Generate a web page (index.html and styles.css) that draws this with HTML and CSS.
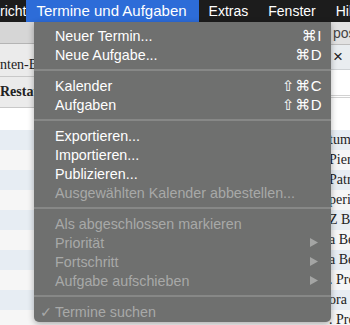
FILE: index.html
```html
<!DOCTYPE html>
<html lang="de">
<head>
  <meta charset="UTF-8" />
  <title>Termine und Aufgaben</title>
  <link rel="stylesheet" href="styles.css">
</head>
<body>
  <div class="menubar">
    <span class="bar-item cut">richt</span>
    <span class="bar-item active">Termine und Aufgaben</span>
    <span class="bar-item">Extras</span>
    <span class="bar-item">Fenster</span>
    <span class="bar-item">Hilfe</span>
  </div>

  <div class="window">
    <div class="top">
      <div class="pane-left">
        <div class="toolbar"></div>
        <div class="head-row">nten-Besprechung</div>
        <div class="head-row strong">Restaurant</div>
        <div class="blank"></div>
      </div>
      <div class="pane-right">
        <div class="search">pos</div>
        <div class="close-row">×</div>
        <div class="white-a"></div>
        <div class="white-b"></div>
      </div>
    </div>

    <div class="list">
      <div class="row"><span class="cell-main"></span><span class="cell-loc">tum</span></div>
      <div class="row"><span class="cell-main"></span><span class="cell-loc">Pierre</span></div>
      <div class="row"><span class="cell-main"></span><span class="cell-loc">Patrick</span></div>
      <div class="row"><span class="cell-main"></span><span class="cell-loc">periode</span></div>
      <div class="row"><span class="cell-main"></span><span class="cell-loc">Z Bar</span></div>
      <div class="row"><span class="cell-main"></span><span class="cell-loc">a Berg</span></div>
      <div class="row"><span class="cell-main"></span><span class="cell-loc">a Berg</span></div>
      <div class="row"><span class="cell-main"></span><span class="cell-loc">. Preis</span></div>
      <div class="row"><span class="cell-main"></span><span class="cell-loc">ora</span></div>
      <div class="row"><span class="cell-main"></span><span class="cell-loc">. Preis</span></div>
    </div>
  </div>

  <div class="dropdown">
    <div class="item"><span>Neuer Termin...</span><span class="key">⌘I</span></div>
    <div class="item"><span>Neue Aufgabe...</span><span class="key">⌘D</span></div>
    <div class="sep"></div>
    <div class="item"><span>Kalender</span><span class="key">⇧⌘C</span></div>
    <div class="item"><span>Aufgaben</span><span class="key">⇧⌘D</span></div>
    <div class="sep"></div>
    <div class="item"><span>Exportieren...</span></div>
    <div class="item"><span>Importieren...</span></div>
    <div class="item"><span>Publizieren...</span></div>
    <div class="item disabled"><span>Ausgewählten Kalender abbestellen...</span></div>
    <div class="sep"></div>
    <div class="item disabled"><span>Als abgeschlossen markieren</span></div>
    <div class="item disabled">
      <span>Priorität</span>
      <svg class="arrow" width="8" height="9" viewBox="0 0 8 9"><path d="M0 0 L8 4.5 L0 9 Z"/></svg>
    </div>
    <div class="item disabled">
      <span>Fortschritt</span>
      <svg class="arrow" width="8" height="9" viewBox="0 0 8 9"><path d="M0 0 L8 4.5 L0 9 Z"/></svg>
    </div>
    <div class="item disabled">
      <span>Aufgabe aufschieben</span>
      <svg class="arrow" width="8" height="9" viewBox="0 0 8 9"><path d="M0 0 L8 4.5 L0 9 Z"/></svg>
    </div>
    <div class="sep"></div>
    <div class="item disabled"><span><span class="check">✓</span>Termine suchen</span></div>
  </div>
</body>
</html>
```

FILE: styles.css
```css
body {
  margin: 0;
  width: 350px;
  height: 325px;
  overflow: hidden;
  position: relative;
  font-family: "Liberation Sans", "DejaVu Sans", sans-serif;
  background: #f6f6f6;
}
.menubar {
  display: flex;
  height: 22px;
  background: #1c1c1c;
  color: #fff;
  font-size: 14px;
  line-height: 22px;
  white-space: nowrap;
  overflow: hidden;
}
.bar-item {
  padding: 0 10px;
}
.bar-item.cut {
  width: 34px;
  padding: 0;
  box-sizing: border-box;
}
.bar-item.active {
  background: #2d6cd8;
  font-size: 15px;
  padding: 0 12px 0 10px;
}

/* window behind the menu */
.top {
  display: flex;
  height: 108px;
}
.pane-left {
  width: 331px;
  display: flex;
  flex-direction: column;
}
.toolbar {
  height: 21px;
  background: #d6d6d6;
  border-bottom: 1px solid #b4b4b4;
}
.head-row {
  height: 22px;
  padding-top: 10px;
  line-height: 22px;
  background: #ebebeb;
  border-bottom: 1px solid #c8c8c8;
  font-family: "Liberation Serif", serif;
  font-size: 14px;
  color: #222;
  white-space: nowrap;
  overflow: hidden;
}
.head-row.strong {
  height: 30px;
  padding-top: 0;
  line-height: 30px;
  font-weight: bold;
}
.blank {
  flex: 1;
  background: #fff;
}
.pane-right {
  flex: 1;
  display: flex;
  flex-direction: column;
  overflow: hidden;
  background: #fff;
}
.search {
  height: 22px;
  line-height: 22px;
  padding-left: 2px;
  background: #e2e2e2;
  border-bottom: 1px solid #bdbdbd;
  color: #444;
  font-size: 14px;
}
.close-row {
  height: 24px;
  line-height: 24px;
  padding-left: 2px;
  background: #e9edf0;
  border-bottom: 1px solid #cfd3d6;
  color: #222;
  font-size: 17px;
}
.white-a {
  height: 25px;
  border-bottom: 3px double #d2d2d2;
}
.white-b {
  flex: 1;
}
.list {
  display: flex;
  flex-direction: column;
}
.row {
  display: flex;
  height: 20px;
  background: #f6f6f6;
}
.row:nth-child(odd) {
  background: #e7edf3;
}
.cell-main {
  width: 329px;
  flex-shrink: 0;
}
.cell-loc {
  flex: 1;
  overflow: hidden;
  white-space: nowrap;
  font-family: "Liberation Serif", serif;
  font-size: 14px;
  line-height: 20px;
  color: #222;
}

/* dropdown menu */
.dropdown {
  position: absolute;
  top: 22px;
  left: 34px;
  width: 297px;
  padding: 4px 0 1px;
  box-sizing: border-box;
  background: #6f706f;
  border-radius: 0 0 5px 5px;
  box-shadow: 0 2px 6px rgba(0,0,0,0.3);
  color: #fff;
  font-size: 14.3px;
}
.item {
  display: flex;
  justify-content: space-between;
  align-items: center;
  height: 19px;
  padding: 0 9px 0 21px;
  white-space: nowrap;
}
.item.disabled {
  color: #a8a9a8;
}
.key {
  font-size: 15px;
  letter-spacing: 0.5px;
}
.arrow {
  fill: #a4a5a4;
  margin-right: 4px;
}
.check {
  display: inline-block;
  width: 15px;
  margin-left: -15px;
  font-family: "DejaVu Sans", sans-serif;
}
.sep {
  height: 2px;
  margin: 5px 0;
  background: #878887;
}
```
